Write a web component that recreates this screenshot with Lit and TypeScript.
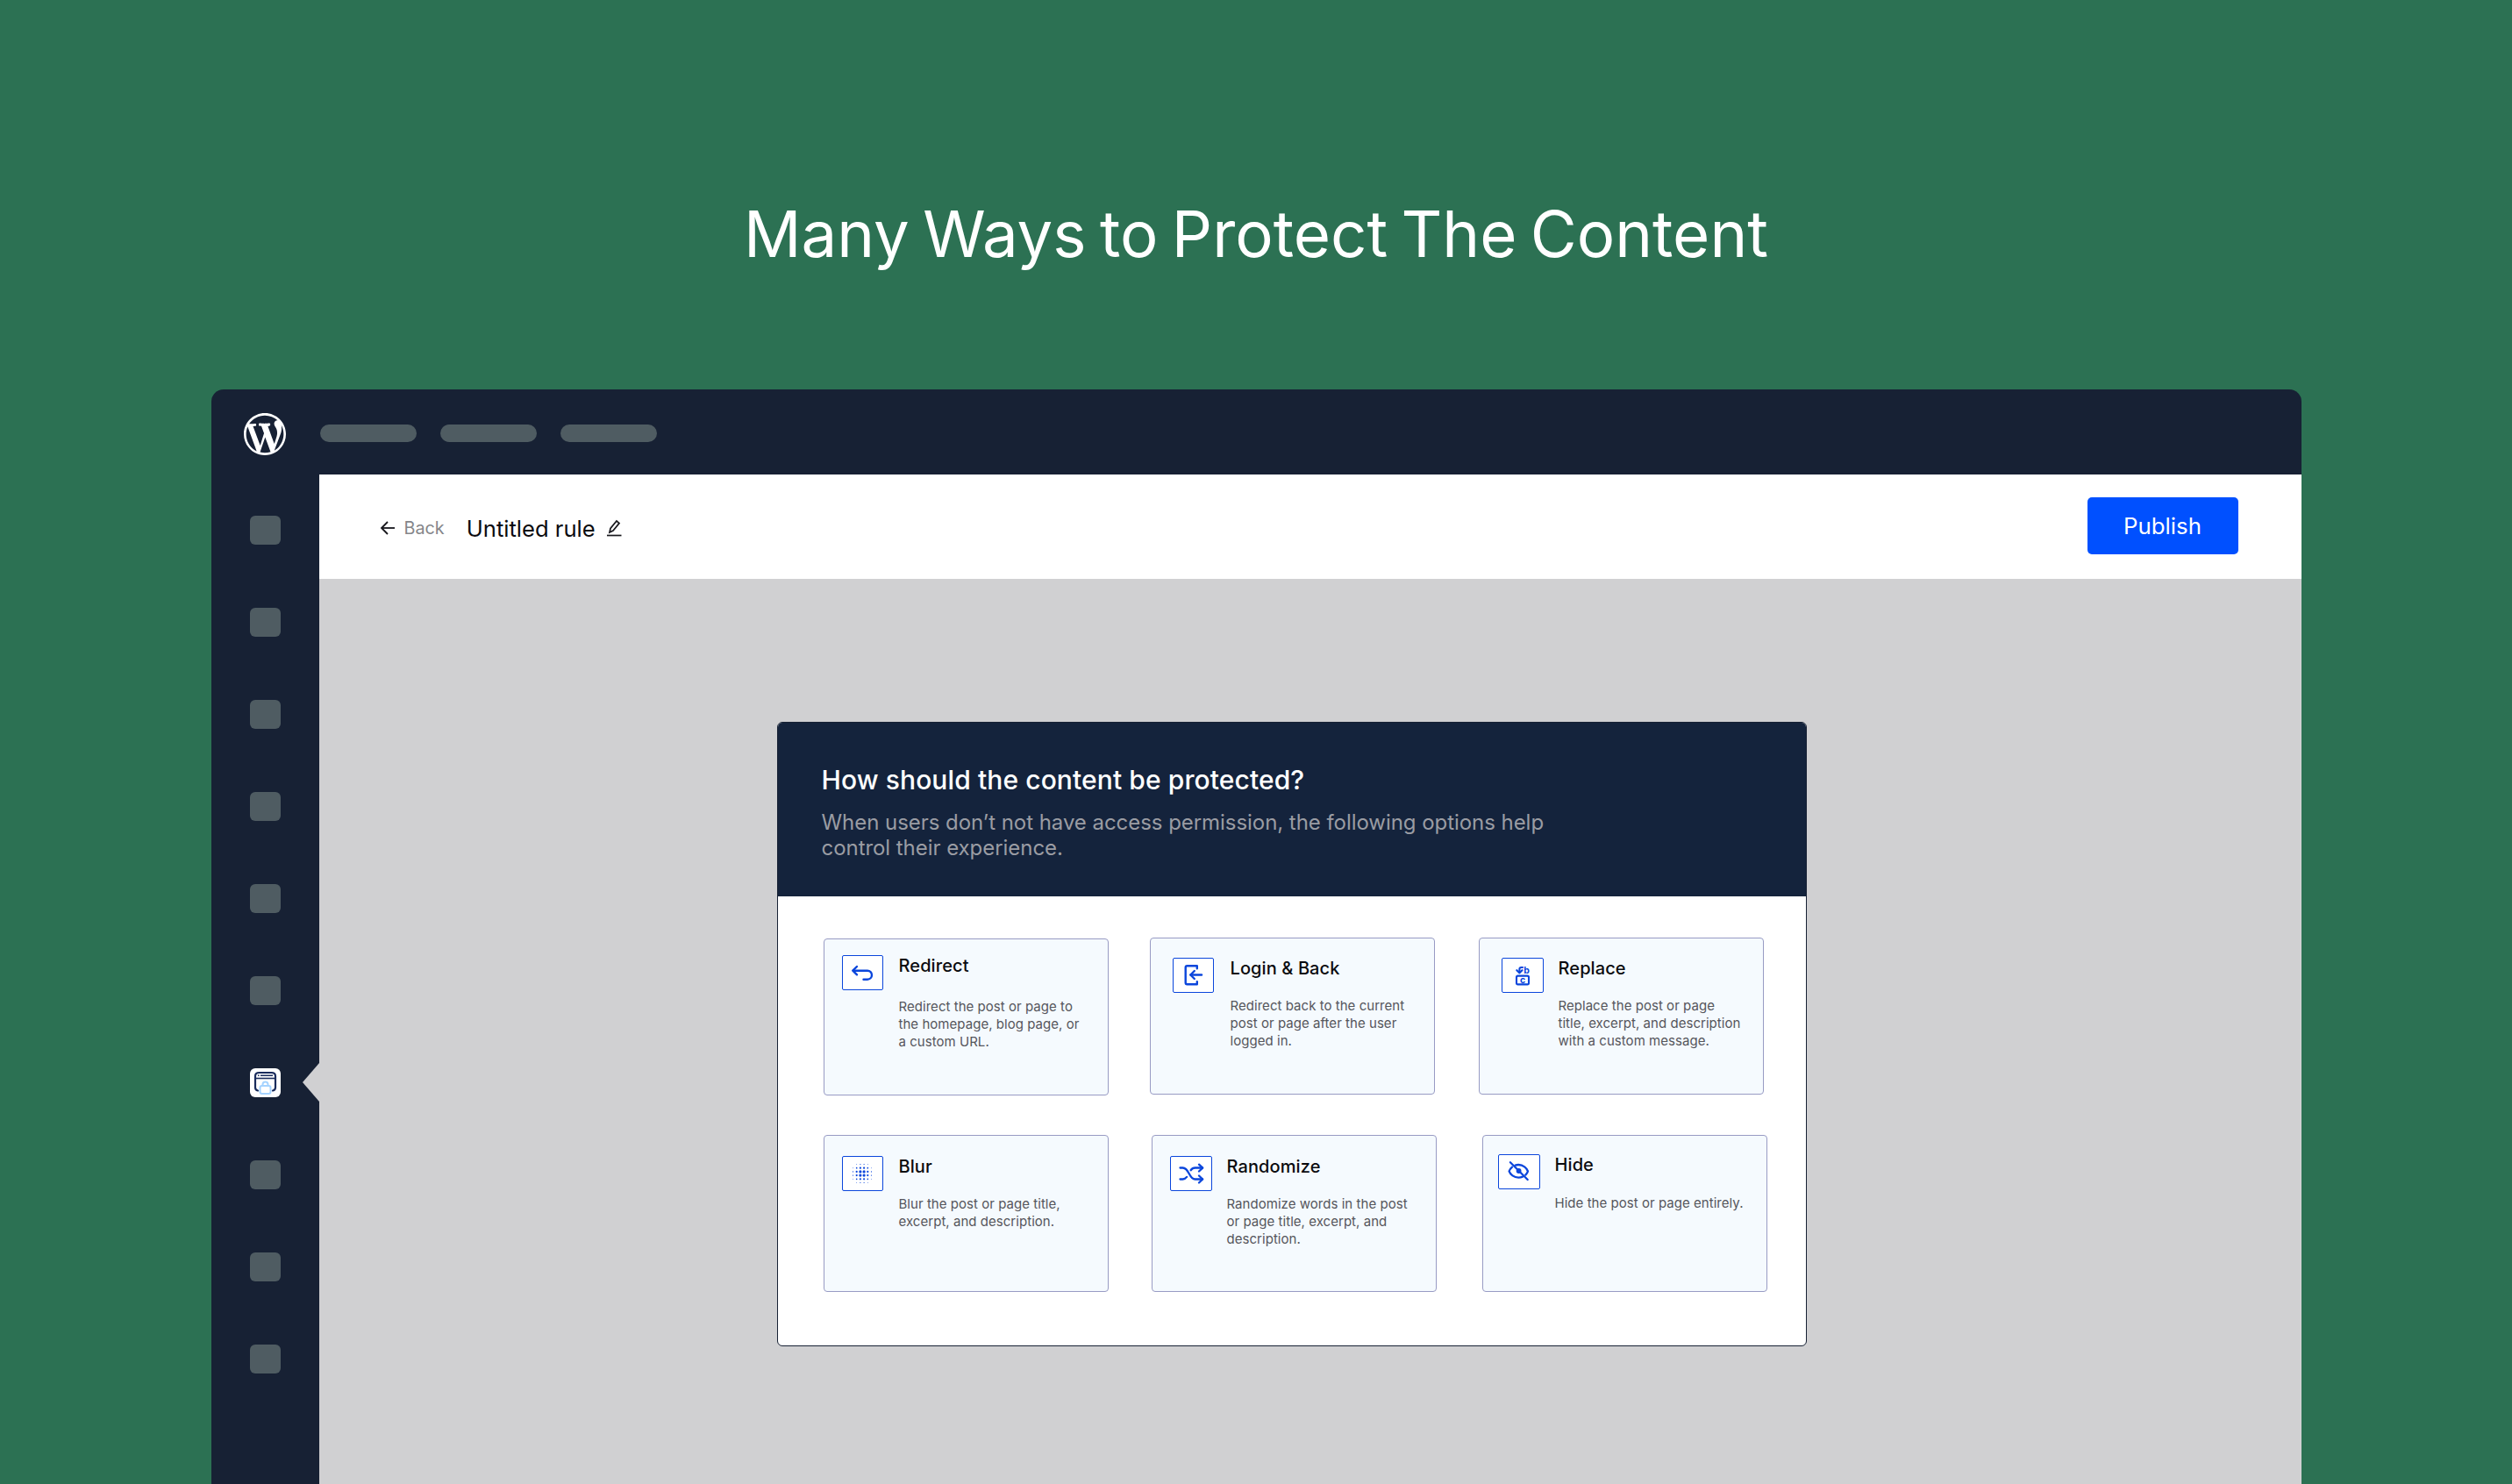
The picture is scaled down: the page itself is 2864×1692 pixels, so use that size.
import { LitElement, html, css, svg } from "lit";
import { customElement } from "lit/decorators.js";

interface Card { key: string; title: string; desc: string[]; cls: string; }

const ROW1: Card[] = [
  { key: "redirect", title: "Redirect", desc: ["Redirect the post or page to", "the homepage, blog page, or", "a custom URL."], cls: "c1" },
  { key: "login", title: "Login & Back", desc: ["Redirect back to the current", "post or page after the user", "logged in."], cls: "c2" },
  { key: "replace", title: "Replace", desc: ["Replace the post or page", "title, excerpt, and description", "with a custom message."], cls: "c3" },
];
const ROW2: Card[] = [
  { key: "blur", title: "Blur", desc: ["Blur the post or page title,", "excerpt, and description."], cls: "c4" },
  { key: "random", title: "Randomize", desc: ["Randomize words in the post", "or page title, excerpt, and", "description."], cls: "c5" },
  { key: "hide", title: "Hide", desc: ["Hide the post or page entirely."], cls: "c6" },
];

const BLUE = "#0b46dc";

function blurDots() {
  const out: any[] = [];
  const pos = [-2.5, -1.5, -0.5, 0.5, 1.5, 2.5];
  for (const y of pos) {
    for (const x of pos) {
      const d = Math.hypot(x, y);
      if (d > 3.2) continue;
      const r = Math.max(0.38, 1.95 - d * 0.52);
      out.push(svg`<circle cx=${14 + x * 4.2} cy=${14 + y * 4.2} r=${r} />`);
    }
  }
  return out;
}

function icon(key: string) {
  switch (key) {
    case "blur":
      return html`<svg width="28" height="28" viewBox="0 0 28 28"><g fill=${BLUE}>${blurDots()}</g></svg>`;
    case "replace":
      return html`<svg width="28" height="28" viewBox="0 0 28 28" fill="none" stroke=${BLUE} stroke-width="2.1" stroke-linecap="round" stroke-linejoin="round">
        <rect x="7" y="14.600" width="14" height="9.800" rx="1.600" />
        <path d="M14 5h-1.600a2 2 0 0 0-2 2v4" /><path d="M7.300 8.200l3.100 3.100 3.100-3.100" />
        <text class="gl" x="15.200" y="11.600" font-size="10.500" font-weight="700" fill=${BLUE} stroke="none">b</text>
        <text class="gl" x="11" y="22.600" font-size="10.500" font-weight="700" fill=${BLUE} stroke="none">c</text>
      </svg>`;
    case "random":
      return html`<svg width="30" height="28" viewBox="0 0 30 28" fill="none" stroke=${BLUE} stroke-width="2.300" stroke-linecap="round" stroke-linejoin="round">
        <path d="M2.500 7.500h3c7.500 0 7 13 14 13h8.500" />
        <path d="M2.500 20.500h3c2 0 3.400-1 4.600-2.600" /><path d="M14.600 10.200c1.200-1.600 2.700-2.700 5-2.700h8.400" />
        <path d="M24 3.700l4.200 3.900-4.200 3.900" /><path d="M24 16.500l4.200 4-4.200 4" />
      </svg>`;
    case "hide":
      return html`<svg width="28" height="28" viewBox="0 0 28 28" fill="none" stroke=${BLUE} stroke-width="2.300" stroke-linecap="round" stroke-linejoin="round">
        <path d="M9.600 6.600C10.900 6.200 12 6 13.300 6c5.300 0 9.400 3.700 10.700 7.300-.5 1.600-1.500 3-2.700 4.300" />
        <path d="M6 8.600C4.400 10 3.200 11.600 2.600 13.300 3.900 17 8 20.600 13.300 20.600c1.700 0 3.200-.3 4.700-1" />
        <circle cx="13.600" cy="13" r="2.900" fill=${BLUE} stroke="none" />
        <path d="M3.900 3.300 23.700 23" />
      </svg>`;
    case "redirect":
      return html`<svg width="28" height="28" viewBox="0 0 28 28" fill="none" stroke=${BLUE} stroke-width="2.400" stroke-linecap="round" stroke-linejoin="round">
        <path d="M3.800 11.700H20a5 5 0 0 1 0 10h-4.500" /><path d="M8 7 3.300 11.700 8 16.300" />
      </svg>`;
    default:
      return html`<svg width="28" height="28" viewBox="0 0 28 28" fill="none" stroke=${BLUE} stroke-width="2.400" stroke-linecap="round" stroke-linejoin="round">
        <path d="M18.800 6.300V3.300H7.500a1.800 1.800 0 0 0-1.800 1.800v17.400a1.800 1.800 0 0 0 1.800 1.800h11.300v-3" /><path d="M24 13.500H11.500" /><path d="M15.800 9 11.300 13.500l4.500 4.500" />
      </svg>`;
  }
}

@customElement("app-root")
export class AppRoot extends LitElement {
  static styles = css`
    :host { display: block; width: 2864px; height: 1692px; overflow: hidden; background: #2c7153; font-family: Inter, "Liberation Sans", sans-serif; }
    .page { height: 1692px; display: flex; flex-direction: column; align-items: center; overflow: hidden; }
    h1 { margin: 0; height: 444px; box-sizing: border-box; padding-top: 222px; font-weight: 420; font-size: 72.5px; word-spacing: -5px; line-height: 90px; color: #fff; text-align: center; white-space: nowrap; }
    .win { width: 2383px; flex: 1; border-radius: 14px 14px 0 0; background: #172134; display: flex; flex-direction: column; overflow: hidden; }
    .top { height: 97px; flex: none; display: flex; align-items: center; padding-left: 37px; box-sizing: border-box; }
    .wp { width: 48px; height: 48px; flex: none; margin: 4px 39px 0 0; }
    .pill { width: 110px; height: 20px; border-radius: 10px; background: #4f5c62; margin: 2px 27px 0 0; }
    .body { flex: 1; display: flex; min-height: 0; }
    .side { width: 123px; flex: none; display: flex; flex-direction: column; align-items: center; padding-top: 47px; box-sizing: border-box; gap: 72px; }
    .sq { width: 35px; height: 33px; border-radius: 6px; background: #4f5c62; position: relative; flex: none; }
    .sq.on { background: #fff; display: flex; align-items: center; justify-content: center; }
    .sq.on::after { content: ""; position: absolute; left: 60px; top: -6px; width: 0; height: 0; border-top: 22px solid transparent; border-bottom: 22px solid transparent; border-right: 19px solid #d0d0d2; }
    .main { flex: 1; background: #d0d0d2; display: flex; flex-direction: column; min-width: 0; }
    .head { height: 119px; flex: none; background: #fff; display: flex; align-items: center; padding: 0 72px 0 69px; box-sizing: border-box; }
    .back { display: flex; align-items: center; color: #85868a; font-size: 19.8px; gap: 10px; margin-top: 3px; }
    .name { font-size: 25.6px; color: #0b0b0f; margin: 3px 0 0 25px; }
    .pen { margin: 2px 0 0 12px; }
    .pub { margin: -2px 0 0 auto; width: 172px; height: 65px; background: #0050ff; color: #fff; border: 0; border-radius: 5px; font: 400 25.8px Inter, sans-serif; padding: 0; }
    .canvas { flex: 1; display: flex; padding: 163px 0 0 522px; }
    .modal { width: 1174px; height: 712px; background: #fff; border-radius: 6px; border: 1px solid #172134; box-sizing: border-box; overflow: hidden; }
    .mh { height: 198px; background: #14233c; box-sizing: border-box; padding: 46px 0 0 50px; }
    .mh h2 { margin: 0; font-weight: 450; font-size: 30px; letter-spacing: 0.1px; line-height: 38px; color: #fff; }
    .mh p { margin: 15px 0 0; font-size: 24px; letter-spacing: -0.05px; line-height: 29px; color: #9a9ca3; }
    .rows { display: flex; flex-direction: column; gap: 45px; padding: 47px 0 0 52px; }
    .row { display: flex; }
    .card { width: 325px; height: 179px; flex: none; box-sizing: border-box; background: #f5fafe; border: 1px solid #989bc4; border-radius: 4px; display: flex; align-items: flex-start; }
    .c1 { margin-top: 1px; padding: 18px 0 0 20px; gap: 18px; }
    .c2 { margin-left: 47px; padding: 22px 0 0 25px; gap: 19px; }
    .c3 { margin-left: 50px; padding: 22px 0 0 25px; gap: 17px; }
    .c4 { padding: 23px 0 0 20px; gap: 18px; }
    .c5 { margin-left: 49px; padding: 23px 0 0 20px; gap: 17px; }
    .c6 { margin-left: 52px; padding: 21px 0 0 17px; gap: 17px; }
    .ib { width: 47px; height: 40px; flex: none; box-sizing: border-box; background: #fff; border: 1px solid #0b46dc; border-radius: 2px; display: flex; align-items: center; justify-content: center; }
    .c3 .ib, .c5 .ib, .c6 .ib { width: 48px; }
    .gl { font-family: Inter, sans-serif; }
    .t { font-size: 20px; font-weight: 450; letter-spacing: 0.1px; line-height: 24px; color: #0b0b0f; }
    .d { margin-top: 21px; font-size: 15px; letter-spacing: 0.04px; line-height: 20px; color: #55565c; white-space: nowrap; }
    .c1 .d { margin-top: 25px; }
    .c6 .d { margin-top: 22px; }
  `;

  render() {
    const card = (c: Card) => html`<div class="card ${c.cls}">
      <div class="ib">${icon(c.key)}</div>
      <div><div class="t">${c.title}</div><div class="d">${c.desc.map((l) => html`<div>${l}</div>`)}</div></div>
    </div>`;
    return html`<div class="page">
      <h1>Many Ways to Protect The Content</h1>
      <div class="win">
        <div class="top">
          <svg class="wp" viewBox="0 0 20 20"><path fill="#fff" d="M20 10c0-5.510-4.490-10-10-10C4.480 0 0 4.490 0 10c0 5.520 4.480 10 10 10 5.510 0 10-4.480 10-10zM7.780 15.370L4.370 6.220c.55-.02 1.170-.08 1.170-.08.5-.06.44-1.130-.06-1.110 0 0-1.450.11-2.370.11-.18 0-.37 0-.58-.01C4.120 2.690 6.870 1.110 10 1.110c2.330 0 4.450.87 6.050 2.340-.68-.11-1.650.39-1.650 1.580 0 .74.45 1.360.9 2.100.35.61.55 1.360.55 2.460 0 1.490-1.400 5-1.400 5l-3.030-8.370c.54-.02.82-.17.82-.17.5-.05.44-1.250-.06-1.220 0 0-1.440.12-2.380.12-.87 0-2.330-.12-2.330-.12-.5-.03-.56 1.200-.06 1.220l.92.08 1.260 3.410zM17.410 10c.24-.64.74-1.870.43-4.250.7 1.290 1.050 2.710 1.050 4.250 0 3.290-1.730 6.240-4.400 7.780.97-2.590 1.940-5.200 2.920-7.780zM6.100 18.090C3.120 16.650 1.110 13.530 1.110 10c0-1.300.23-2.480.72-3.590C3.250 10.300 4.670 14.200 6.100 18.090zm4.030-6.630l2.580 6.980c-.86.29-1.760.45-2.710.45-.79 0-1.570-.11-2.290-.33.81-2.380 1.620-4.740 2.420-7.100z"/></svg>
          <div class="pill"></div><div class="pill"></div><div class="pill"></div>
        </div>
        <div class="body">
          <div class="side">
            ${[0, 1, 2, 3, 4, 5].map(() => html`<div class="sq"></div>`)}
            <div class="sq on">
              <svg width="27" height="27" viewBox="0 0 27 27" fill="none">
                <path d="M5 22.500c-1.500-.4-3-1.600-3-3.500V6c0-2.500 2-4 4.500-4h14C23 2 25 3.500 25 6v13c0 1.900-1.500 3.100-3 3.500" stroke="#1a2c5c" stroke-width="2.200" stroke-linecap="round"/>
                <path d="M2 8.500h23" stroke="#1a2c5c" stroke-width="1.600"/>
                <path d="M5 5.300h1.500M8 5.300h14" stroke="#1a2c5c" stroke-width="1.400"/>
                <rect x="7.500" y="17" width="12" height="9" rx="2.200" stroke="#a5d3ff" stroke-width="2"/>
                <path d="M10.500 17v-1.500a3 3 0 0 1 6 0V17" stroke="#a5d3ff" stroke-width="2"/>
              </svg>
            </div>
            ${[0, 1, 2].map(() => html`<div class="sq"></div>`)}
          </div>
          <div class="main">
            <div class="head">
              <div class="back"><svg width="18" height="18" viewBox="0 0 18 18" fill="none" stroke="#17171c" stroke-width="1.800"><path d="M17 9H2" /><path d="M9 2 2 9l7 7" /></svg><span>Back</span></div>
              <div class="name">Untitled rule</div>
              <svg class="pen" width="18" height="20" viewBox="0 0 18 20" fill="none" stroke="#17171c" stroke-width="1.700"><path d="M1 18.500h16.500"/><path d="M4 15l1-4.500 7-8.500 3 2.500-7 8.500Z"/></svg>
              <button class="pub">Publish</button>
            </div>
            <div class="canvas">
              <div class="modal">
                <div class="mh">
                  <h2>How should the content be protected?</h2>
                  <p>When users don’t not have access permission, the following options help<br>control their experience.</p>
                </div>
                <div class="rows">
                  <div class="row">${ROW1.map(card)}</div>
                  <div class="row">${ROW2.map(card)}</div>
                </div>
              </div>
            </div>
          </div>
        </div>
      </div>
    </div>`;
  }
}
